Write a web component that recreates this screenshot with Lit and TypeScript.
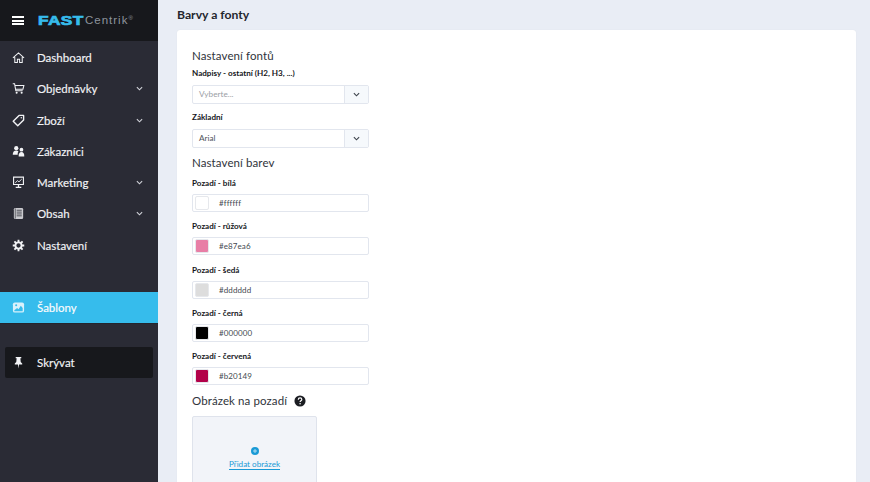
import { LitElement, html, css, svg } from "lit";
import { customElement } from "lit/decorators.js";

const icons: Record<string, unknown> = {
  home: svg`<path d="M1 7.500 7 2l6 5.500M3 6.500V12.500h2.800V9h2.400v3.500H11V6.500" fill="none" stroke="currentColor" stroke-width="1.100"/>`,
  cart: svg`<path d="M.8 2h2l1.300 7.500h7.400M3.300 3.700h9.500l-1 4H4" fill="none" stroke="currentColor" stroke-width="1.100"/><circle cx="5" cy="11.600" r="1.100" fill="currentColor"/><circle cx="10.400" cy="11.600" r="1.100" fill="currentColor"/>`,
  tag: svg`<path d="M7.600 1.500h4.900v4.900l-6.300 6.300-4.900-4.900z" fill="none" stroke="currentColor" stroke-width="1.500" stroke-linejoin="round"/><circle cx="10" cy="4" r=".8" fill="currentColor"/>`,
  users: svg`<circle cx="4.600" cy="3.400" r="2.300" fill="currentColor"/><circle cx="10.200" cy="5" r="2" fill="currentColor"/><path d="M.8 10.500c0-3 1.400-4.600 3.800-4.600.9 0 1.700.3 2.300.8-.6 1-.9 2.300-.8 3.800zM7.200 12.500c-.3-3.400 1-5 3-5s3.300 1.600 3 5z" fill="currentColor"/>`,
  board: svg`<path d="M1.700 1.200h10.600v8H1.700z" fill="none" stroke="currentColor" stroke-width="1.200"/><path d="M3.500 7.300 6 5l1.500 1.300 3-3" fill="none" stroke="currentColor"/><path d="M6.300 9.500h1.400v2.200H10v1.300H4v-1.300h2.300z" fill="currentColor"/>`,
  book: svg`<rect x="2" y="1" width="10" height="12" rx="1.500" fill="currentColor" opacity=".8"/><path d="M5 3.500h5.500M5 5.500h5.500M5 7.500h5.500M5 9.500h5.500" stroke="#2a2b35" stroke-width=".8"/><path d="M3.500 1.500v11" stroke="#2a2b35" stroke-width=".7"/>`,
  gear: svg`<circle cx="7" cy="7" r="3.300" fill="none" stroke="currentColor" stroke-width="2"/><path d="M7 .8v2.400M7 10.800v2.400M.8 7h2.400M10.800 7h2.400M2.600 2.600l1.700 1.700M9.700 9.700l1.700 1.700M2.600 11.400l1.700-1.700M9.700 4.300l1.700-1.700" stroke="currentColor" stroke-width="2"/>`,
  image: svg`<rect x="1" y="1.500" width="12" height="11" rx="2" fill="#d8f1fb"/><path d="M2.500 10 5.500 7.500l1.500 1.500 2.500-4 2 2.500V11H2.500z" fill="#36bcec"/><circle cx="4.500" cy="4.500" r="1.100" fill="#36bcec"/>`,
  pin: svg`<path d="M4 1h6v1.400H9l.4 4L11 8v1.200H7.600L7 13.500l-.6-4.300H3V8l1.600-1.600.4-4H4z" fill="currentColor"/>`,
};

const nav = [
  { label: "Dashboard", icon: "home" },
  { label: "Objednávky", icon: "cart", sub: true },
  { label: "Zboží", icon: "tag", sub: true },
  { label: "Zákazníci", icon: "users" },
  { label: "Marketing", icon: "board", sub: true },
  { label: "Obsah", icon: "book", sub: true },
  { label: "Nastavení", icon: "gear" },
];

const colors = [
  { label: "Pozadí - bílá", value: "#ffffff" },
  { label: "Pozadí - růžová", value: "#e87ea6" },
  { label: "Pozadí - šedá", value: "#dddddd" },
  { label: "Pozadí - černá", value: "#000000" },
  { label: "Pozadí - červená", value: "#b20149" },
];

const chevron = html`<svg class="chev" viewBox="0 0 8 5" width="7" height="5"><path d="M1 1l3 3 3-3" fill="none" stroke="currentColor" stroke-width="1.300"/></svg>`;

@customElement("app-root")
export class AppRoot extends LitElement {
  static styles = css`
    :host {
      display: flex;
      width: 870px;
      height: 482px;
      overflow: hidden;
      background: #e9edf5;
      font-family: "Lato", sans-serif;
      color: #1f2229;
    }
    .side {
      width: 158px;
      flex: none;
      background: #2a2b35;
      color: #f2f3f6;
      font-size: 11.500px;
      font-weight: 400;
      -webkit-text-stroke: 0.15px #f2f3f6;
    }
    .brand {
      height: 41px;
      background: #17181c;
      display: flex;
      align-items: center;
      padding-left: 12px;
      box-sizing: border-box;
      -webkit-text-stroke: 0;
    }
    .burger {
      width: 12px;
      height: 9px;
      border-top: 2px solid #fff;
      border-bottom: 2px solid #fff;
      position: relative;
      box-sizing: border-box;
      margin-right: 14px;
    }
    .burger::after {
      content: "";
      position: absolute;
      left: 0;
      right: 0;
      top: 1.500px;
      height: 2px;
      background: #fff;
    }
    .fast {
      width: 47px;
      margin-top: 1px;
      font: 700 12.500px/1 "Liberation Sans", sans-serif;
      -webkit-text-stroke: 0.7px #36bcec;
      color: #36bcec;
      letter-spacing: 0.3px;
      transform: scaleX(1.38);
      transform-origin: left;
    }
    .centrik {
      margin-top: 1px;
      font: 400 11.500px/1 "Liberation Sans", sans-serif;
      color: #8d949c;
      letter-spacing: 1px;
    }
    .centrik sup {
      font-size: 6px;
      vertical-align: 4px;
      line-height: 0;
    }
    .nav {
      padding-top: 0.800px;
    }
    .item {
      height: 31.300px;
      display: flex;
      align-items: center;
      padding-left: 12px;
    }
    .item svg.ico {
      width: 13px;
      height: 13px;
      margin-right: 12px;
      flex: none;
    }
    .item .chev {
      margin-left: auto;
      margin-right: 15px;
      color: #d0d2d8;
    }
    .active {
      margin-top: 31px;
      height: 31px;
      background: #36bcec;
      border-bottom: 1px solid #24252d;
      color: #fff;
    }
    .pin {
      margin: 23px 5px 0;
      height: 31px;
      background: #17181c;
      border-radius: 2px;
      padding-left: 7px;
    }
    .main {
      flex: 1;
      padding: 0 14px 0 19px;
      min-width: 0;
    }
    h1 {
      margin: 0;
      height: 30px;
      line-height: 30px;
      font-size: 12.200px;
      font-weight: 700;
      color: #23262d;
    }
    .card {
      background: #fff;
      border-radius: 3px 3px 0 0;
      height: 452px;
      padding: 18px 15px 0;
      box-sizing: border-box;
      box-shadow: 0 0 1px #d5d9e2;
    }
    h2 {
      margin: 0;
      font-size: 11.500px;
      font-weight: 400;
      line-height: 16px;
      color: #30343b;
      letter-spacing: 0.1px;
    }
    .field {
      width: 177px;
    }
    label {
      display: block;
      font-size: 8.100px;
      font-weight: 700;
      line-height: 12px;
      color: #14161a;
      margin: 0;
    }
    .select {
      display: flex;
      height: 17px;
      margin-top: 6px;
      border: 1px solid #e2e6ee;
      border-radius: 2px;
      font-size: 8.200px;
      color: #4d5259;
      width: 175px;
    }
    .select span {
      flex: 1;
      line-height: 17px;
      padding-left: 6px;
    }
    .select .ph {
      color: #9a9ea5;
    }
    .select b {
      width: 23px;
      border-left: 1px solid #e2e6ee;
      background: #f6f9fc;
      display: flex;
      align-items: center;
      justify-content: center;
      color: #3e444c;
    }
    .fontfield {
      margin-top: 3px;
    }
    .fontfield.second {
      margin-top: 7px;
    }
    .colors-title {
      margin-top: 7px;
    }
    .cfields {
      margin-top: 6px;
    }
    .cfield {
      height: 43.300px;
      box-sizing: border-box;
    }
    .color {
      display: flex;
      align-items: center;
      height: 16px;
      margin-top: 5px;
      border: 1px solid #e2e6ee;
      border-radius: 2px;
      font-size: 8px;
      color: #454a51;
      letter-spacing: 0.1px;
      width: 175px;
    }
    .swatch {
      width: 14px;
      height: 14px;
      margin-left: 2px;
      margin-right: 10px;
      border-radius: 2px;
      border: 1px solid #e6e8ec;
      box-sizing: border-box;
    }
    .imgtitle {
      display: flex;
      align-items: center;
      gap: 7px;
    }
    .upload {
      width: 123px;
      height: 80px;
      margin-top: 7px;
      border: 1px solid #dfe3ec;
      border-radius: 2px;
      background: #f2f4f9;
      display: flex;
      flex-direction: column;
      align-items: center;
      padding-top: 30px;
    }
    .upload a {
      font-size: 8.100px;
      color: #1a9ad6;
      border-bottom: 1px solid #1a9ad6;
      line-height: 10px;
      margin-top: 4px;
    }
  `;

  render() {
    return html`
      <aside class="side">
        <div class="brand">
          <div class="burger"></div>
          <span class="fast">FAST</span><span class="centrik">Centrik<sup>®</sup></span>
        </div>
        <nav class="nav">
          ${nav.map(
            (n) => html`<div class="item">
              <svg class="ico" viewBox="0 0 14 14">${icons[n.icon]}</svg>
              <span>${n.label}</span>
              ${n.sub ? chevron : ""}
            </div>`
          )}
          <div class="item active">
            <svg class="ico" viewBox="0 0 14 14">${icons.image}</svg>
            <span>Šablony</span>
          </div>
          <div class="item pin">
            <svg class="ico" viewBox="0 0 14 14">${icons.pin}</svg>
            <span>Skrývat</span>
          </div>
        </nav>
      </aside>
      <main class="main">
        <h1>Barvy a fonty</h1>
        <section class="card">
          <h2>Nastavení fontů</h2>
          <div class="field fontfield">
            <label>Nadpisy - ostatní (H2, H3, ...)</label>
            <div class="select"><span class="ph">Vyberte...</span><b>${chevron}</b></div>
          </div>
          <div class="field fontfield second">
            <label>Základní</label>
            <div class="select"><span>Arial</span><b>${chevron}</b></div>
          </div>
          <h2 class="colors-title">Nastavení barev</h2>
          <div class="cfields">
            ${colors.map(
              (c) => html`<div class="field cfield">
                <label>${c.label}</label>
                <div class="color">
                  <span class="swatch" style="background:${c.value}"></span>
                  <span>${c.value}</span>
                </div>
              </div>`
            )}
          </div>
          <h2 class="imgtitle">
            Obrázek na pozadí
            <svg viewBox="0 0 14 14" width="12" height="12"><circle cx="7" cy="7" r="6.500" fill="#1b1d22"/><path d="M5 5.400c0-1.300 1-2 2.100-2s2 .7 2 1.800c0 1.600-2 1.500-2 3" fill="none" stroke="#fff" stroke-width="1.400"/><circle cx="7.100" cy="10.300" r=".9" fill="#fff"/></svg>
          </h2>
          <div class="upload">
            <svg viewBox="0 0 10 10" width="8" height="8"><circle cx="5" cy="5" r="5" fill="#1a9ad6"/><path d="M5 2.500v5M2.500 5h5" stroke="#cfeaf7" stroke-width="1"/></svg>
            <a>Přidat obrázek</a>
          </div>
        </section>
      </main>
    `;
  }
}
